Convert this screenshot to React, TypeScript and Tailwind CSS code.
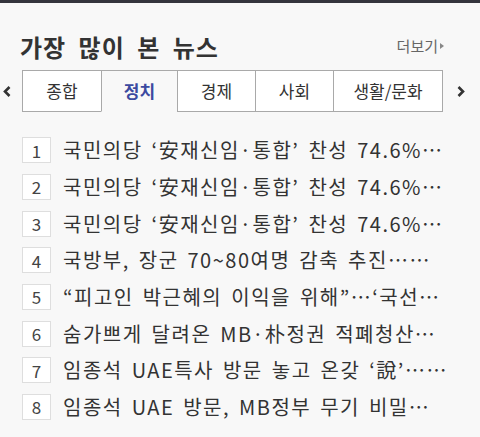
import React from 'react';

const font = { fontFamily: '"Noto Sans CJK KR", "Noto Sans", sans-serif' };

const tabs = ['종합', '정치', '경제', '사회', '생활/문화'];
const tabWidths = ['w-[79px]', 'w-[76px]', 'w-[78px]', 'w-[78px]', 'w-[110px]'];

const headlines = [
  '국민의당 ‘安재신임·통합’ 찬성 74.6%…',
  '국민의당 ‘安재신임·통합’ 찬성 74.6%…',
  '국민의당 ‘安재신임·통합’ 찬성 74.6%…',
  '국방부, 장군 70~80여명 감축 추진……',
  '“피고인 박근혜의 이익을 위해”…‘국선…',
  '숨가쁘게 달려온 MB·朴정권 적폐청산…',
  '임종석 UAE특사 방문 놓고 온갖 ‘說’……',
  '임종석 UAE 방문, MB정부 무기 비밀…',
];

const Chevron: React.FC<{ dir: 'left' | 'right' }> = ({ dir }) => (
  <svg width="8" height="11" viewBox="0 0 8 11" className="text-[#333]">
    <path
      d={dir === 'left' ? 'M6.5 1 L2 5.5 L6.5 10' : 'M1.5 1 L6 5.5 L1.5 10'}
      fill="none"
      stroke="currentColor"
      strokeWidth="2.6"
    />
  </svg>
);

export default function App() {
  const active = 1;
  return (
    <div className="w-[480px] h-[437px] bg-[#f8f8f8] overflow-hidden" style={font}>
      <div className="h-[3px] bg-[#34353d]" />

      {/* header */}
      <div className="flex items-center justify-between pl-[20px] pr-[36px] pt-[32px]">
        <h2 className="text-[24px] leading-[24px] font-bold text-[#333] tracking-[1px] [word-spacing:6px]">
          가장 많이 본 뉴스
        </h2>
        <a href="#" className="flex items-center gap-[2px] text-[15px] leading-[16px] text-[#666] -mt-[2px]">
          더보기
          <span className="inline-block w-0 h-0 border-y-[3.5px] border-y-transparent border-l-[4px] border-l-[#888]" />
        </a>
      </div>

      {/* category tabs */}
      <div className="flex items-center mt-[11px]">
        <button className="w-[22px] flex justify-start pl-[3px]">
          <Chevron dir="left" />
        </button>
        <ul className="flex">
          {tabs.map((t, i) => (
            <li
              key={t}
              className={`${tabWidths[i]} h-[42px] flex items-center justify-center border-t border-l border-[#a9a9a9] text-[17px] ${
                i === tabs.length - 1 ? 'border-r' : ''
              } ${
                i === active
                  ? 'border-b border-b-transparent font-bold text-[#3b4aa0]'
                  : 'border-b bg-white text-[#333]'
              }`}
            >
              {t}
            </li>
          ))}
        </ul>
        <button className="flex-1 flex justify-center pr-[2px]">
          <Chevron dir="right" />
        </button>
      </div>

      {/* ranked headlines */}
      <ol className="mt-[20px] pl-[22px]">
        {headlines.map((h, i) => (
          <li key={i} className="h-[36.7px] flex items-center gap-[12px]">
            <span className="w-[29px] h-[26px] shrink-0 flex items-center justify-center border border-[#dedede] bg-white text-[17px] text-[#444]">
              {i + 1}
            </span>
            <span className="text-[20px] text-[#333] whitespace-nowrap tracking-[1.5px] [word-spacing:3px]">{h}</span>
          </li>
        ))}
      </ol>
    </div>
  );
}
